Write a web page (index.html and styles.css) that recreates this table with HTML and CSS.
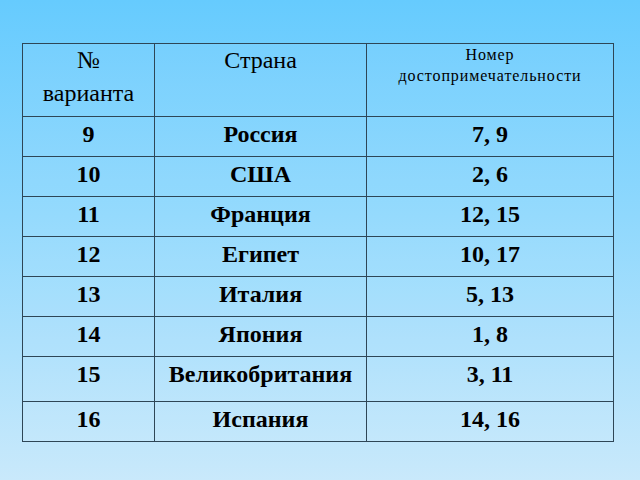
FILE: index.html
```html
<!DOCTYPE html>
<html lang="ru">
<head>
<meta charset="utf-8">
<link rel="stylesheet" href="styles.css">
</head>
<body>
<div class="slide">
  <table class="grid">
    <colgroup>
      <col class="c1"><col class="c2"><col class="c3">
    </colgroup>
    <thead>
      <tr class="head">
        <th class="h-big">№<br>варианта</th>
        <th class="h-big">Страна</th>
        <th class="h-small">Номер<br>достопримечательности</th>
      </tr>
    </thead>
    <tbody>
      <tr><td>9</td><td>Россия</td><td>7, 9</td></tr>
      <tr><td>10</td><td>США</td><td>2, 6</td></tr>
      <tr><td>11</td><td>Франция</td><td>12, 15</td></tr>
      <tr><td>12</td><td>Египет</td><td>10, 17</td></tr>
      <tr><td>13</td><td>Италия</td><td>5, 13</td></tr>
      <tr><td>14</td><td>Япония</td><td>1, 8</td></tr>
      <tr class="tall"><td>15</td><td>Великобритания</td><td>3, 11</td></tr>
      <tr><td>16</td><td>Испания</td><td>14, 16</td></tr>
    </tbody>
  </table>
</div>
</body>
</html>
```

FILE: styles.css
```css
html, body {
  margin: 0;
  padding: 0;
}
body {
  width: 640px;
  height: 480px;
  overflow: hidden;
  background: linear-gradient(to bottom, #66cbfe 0%, #8fd8fd 45%, #c9e9fb 100%);
  color: #000;
  font-family: "Liberation Serif", "Times New Roman", serif;
}
.slide {
  padding: 43px 0 0 22px;
}
.grid {
  border-collapse: collapse;
  width: 591px;
  table-layout: fixed;
  background: rgba(255, 255, 255, 0.06);
  border: 1.5px solid #243c4c;
}
.c1 { width: 132px; }
.c2 { width: 212px; }
.c3 { width: 247px; }
.grid th, .grid td {
  border: 1px solid #2e4656;
  text-align: center;
  vertical-align: top;
  padding: 0;
}
.head th {
  height: 72px;
  font-weight: normal;
}
.h-big {
  font-size: 24px;
  line-height: 33px;
  padding-top: 2px;
}
.h-small {
  font-size: 16px;
  line-height: 21px;
  padding-top: 6px;
  letter-spacing: 0.9px;
}
.grid td {
  height: 40px;
  box-sizing: border-box;
  font-size: 24px;
  font-weight: bold;
  line-height: 27px;
  padding-top: 4px;
}
.grid tr.tall td {
  height: 45px;
}
```
